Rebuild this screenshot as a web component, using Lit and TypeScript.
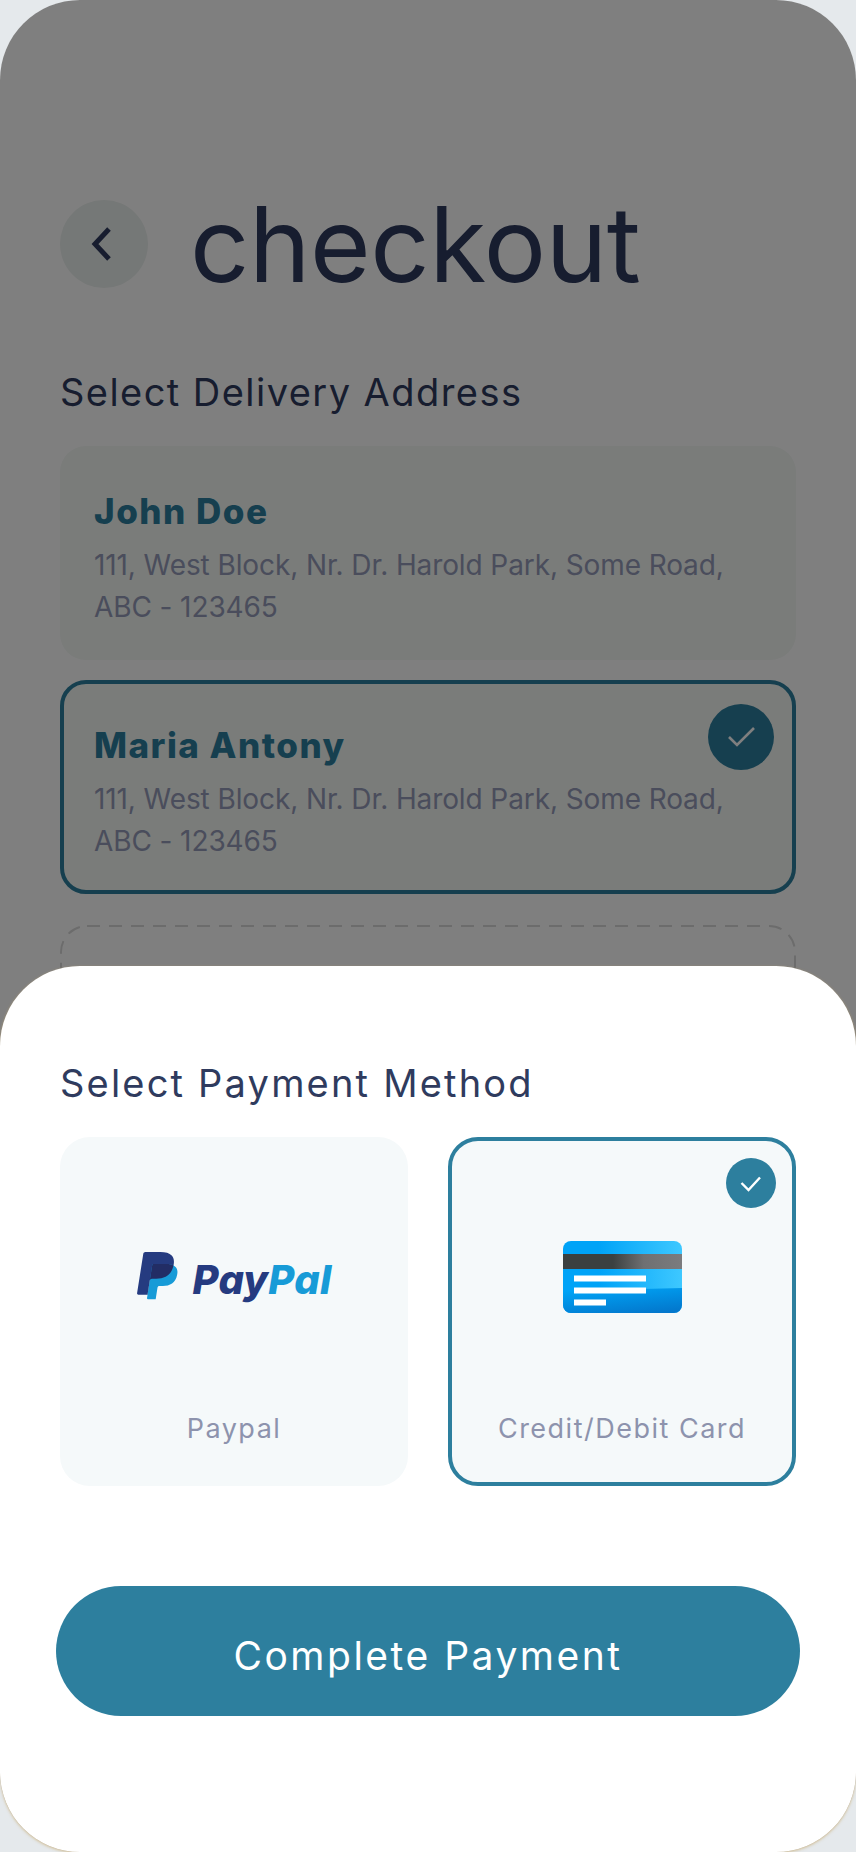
import { LitElement, html, css, svg } from "lit";
import { customElement } from "lit/decorators.js";

const ppPath = "M7.076 21.337H2.47a.641.641 0 0 1-.633-.74L4.944.901C5.026.382 5.474 0 5.998 0h7.46c2.57 0 4.578.543 5.69 1.81 1.01 1.15 1.304 2.42 1.012 4.287-.023.143-.047.288-.077.437-.983 5.05-4.349 6.797-8.647 6.797h-2.19c-.524 0-.968.382-1.05.9l-1.12 7.106z";

const paypalMark = svg`
  <defs>
    <clipPath id="ppclip"><path transform="translate(-3.6 0) scale(2)" d="${ppPath}"/></clipPath>
  </defs>
  <path transform="translate(-3.6 0) scale(2)" fill="#253b80" d="${ppPath}"/>
  <path transform="translate(7 12) scale(1.65)" fill="#179bd7" d="${ppPath}"/>
  <g clip-path="url(#ppclip)"><path transform="translate(7 12) scale(1.65)" fill="#222d65" d="${ppPath}"/></g>`;

@customElement("app-root")
export class AppRoot extends LitElement {
  static styles = css`
    :host {
      display: block;
      width: 856px;
      height: 1852px;
      background: #e5e9ec;
      font-family: Inter, "Noto Sans", sans-serif;
    }
    .phone {
      position: relative;
      width: 856px;
      height: 1852px;
    }
    .screen {
      box-sizing: border-box;
      height: 1852px;
      padding: 200px 60px 0;
      background: #fff;
      border-radius: 80px;
      overflow: hidden;
    }
    .overlay {
      position: absolute;
      inset: 0;
      background: rgba(0, 0, 0, 0.5);
      border-radius: 80px;
    }
    .header {
      display: flex;
      align-items: center;
      gap: 42px;
      height: 88px;
    }
    .back {
      width: 88px;
      height: 88px;
      border-radius: 50%;
      background: #ebf0ee;
      display: flex;
      align-items: center;
      justify-content: center;
      flex: none;
    }
    .back svg {
      margin-left: -6px;
    }
    .title {
      margin: 0;
      font-size: 104px;
      font-weight: 400;
      line-height: 88px;
      letter-spacing: -0.4px;
      color: #2f3b5e;
    }
    .section {
      margin: 0;
      font-weight: 400;
      font-size: 38px;
      line-height: 50px;
      letter-spacing: 1.45px;
      color: #2f3b5e;
    }
    .delivery {
      margin-top: 79px;
    }
    .addresses {
      display: flex;
      flex-direction: column;
      gap: 20px;
      margin-top: 29px;
    }
    .addr {
      position: relative;
      box-sizing: border-box;
      height: 214px;
      padding: 41px 32px 0;
      border-radius: 26px;
      background: #f4f8f5;
      border: 2px solid transparent;
    }
    .addr.selected {
      border: 4px solid #2d7f9e;
      padding: 39px 30px 0;
    }
    .name {
      margin: 0;
      font-size: 35px;
      font-weight: 800;
      line-height: 44px;
      letter-spacing: 1.5px;
      color: #2d7f9e;
    }
    .line {
      margin: 11px 0 0;
      font-size: 28px;
      line-height: 42px;
      letter-spacing: -0.1px;
      color: #949bb8;
    }
    .addr .tick {
      position: absolute;
      top: 20px;
      right: 18px;
      width: 66px;
      height: 66px;
    }
    .tick {
      border-radius: 50%;
      background: #2d7f9e;
      display: flex;
      align-items: center;
      justify-content: center;
    }
    .dashed {
      height: 214px;
      margin-top: 11px;
    }
    .dashed rect {
      fill: none;
      stroke: #d8d8d8;
      stroke-width: 2;
      stroke-dasharray: 13 9;
    }
    .sheet {
      position: absolute;
      left: 0;
      right: 0;
      bottom: 0;
      box-sizing: border-box;
      height: 886px;
      padding: 92px 60px 0;
      background: #fff;
      border-radius: 80px;
      box-shadow: 0 1px 3px rgba(200, 170, 110, 0.7);
    }
    .pay-title {
      color: #2f3b5e;
      letter-spacing: 2.2px;
    }
    .methods {
      display: grid;
      grid-template-columns: 348px 348px;
      gap: 40px;
      margin-top: 29px;
    }
    .method {
      position: relative;
      box-sizing: border-box;
      height: 349px;
      padding-bottom: 39px;
      border-radius: 30px;
      background: #f5f9fa;
      display: flex;
      flex-direction: column;
      align-items: center;
    }
    .method.selected {
      border: 4px solid #2d7f9e;
      padding-bottom: 35px;
    }
    .method .tick {
      position: absolute;
      top: 17px;
      right: 16px;
      width: 50px;
      height: 50px;
    }
    .logo {
      height: 72px;
      margin-top: 103px;
      flex: none;
      display: flex;
      align-items: center;
      justify-content: center;
    }
    .method.selected .logo {
      margin-top: 100px;
    }
    .paypal {
      gap: 14px;
    }
    .word {
      margin-top: 8px;
      font-size: 40px;
      font-weight: 800;
      font-style: italic;
      letter-spacing: 0.2px;
      line-height: 48px;
      color: #253b80;
    }
    .word span {
      color: #179bd7;
    }
    .label {
      margin-top: auto;
      font-size: 27px;
      line-height: 36px;
      letter-spacing: 1.5px;
      color: #8d93ad;
    }
    .pay {
      display: block;
      box-sizing: border-box;
      width: 744px;
      height: 130px;
      margin: 100px 0 0 -4px;
      padding: 8px 0 0;
      border: 0;
      border-radius: 65px;
      background: #2d7f9e;
      color: #fff;
      font-family: inherit;
      font-size: 39px;
      font-weight: 400;
      letter-spacing: 2.5px;
    }
    svg {
      display: block;
    }
  `;

  private check(size: number, w: number) {
    const pts = size === 66 ? "21,33 29,41 46,24" : "15.5,25 22.5,32 34,19.5";
    return html`<div class="tick"><svg width="${size}" height="${size}" viewBox="0 0 ${size} ${size}"><polyline points="${pts}" fill="none" stroke="#fff" stroke-width="${w}"/></svg></div>`;
  }

  private address(name: string, selected: boolean) {
    return html`<div class="addr ${selected ? "selected" : ""}">
      <p class="name">${name}</p>
      <p class="line">111, West Block, Nr. Dr. Harold Park, Some Road,<br />ABC - 123465</p>
      ${selected ? this.check(66, 2.6) : ""}
    </div>`;
  }

  render() {
    return html`<div class="phone">
      <div class="screen">
        <div class="header">
          <div class="back">
            <svg width="24" height="36" viewBox="0 0 24 36"><polyline points="20,3 6,18 20,33" fill="none" stroke="#2f3b5e" stroke-width="5"/></svg>
          </div>
          <h1 class="title">checkout</h1>
        </div>
        <h2 class="section delivery">Select Delivery Address</h2>
        <div class="addresses">
          ${this.address("John Doe", false)}
          ${this.address("Maria Antony", true)}
          <div class="dashed">
            <svg width="736" height="214" viewBox="0 0 736 214"><rect x="1" y="1" width="734" height="212" rx="26"/></svg>
          </div>
        </div>
      </div>
      <div class="overlay"></div>
      <div class="sheet">
        <h2 class="section pay-title">Select Payment Method</h2>
        <div class="methods">
          <div class="method">
            <div class="logo paypal">
              <svg width="42" height="48" viewBox="0 0 42 48">${paypalMark}</svg>
              <div class="word">Pay<span>Pal</span></div>
            </div>
            <div class="label">Paypal</div>
          </div>
          <div class="method selected">
            ${this.check(50, 2.4)}
            <div class="logo">
              <svg width="119" height="72" viewBox="0 0 119 72">
                <defs>
                  <linearGradient id="cb" x1="0" x2="1" y1="0" y2="0"><stop offset="0.3" stop-color="#00a3f7"/><stop offset="1" stop-color="#3ec8ff"/></linearGradient>
                  <linearGradient id="cl" x1="0.3" x2="0.8" y1="0" y2="1"><stop offset="0" stop-color="#00a3f5"/><stop offset="1" stop-color="#0377cc"/></linearGradient>
                  <linearGradient id="cs" x1="0" x2="1" y1="0" y2="0"><stop offset="0.42" stop-color="#3b4040"/><stop offset="0.68" stop-color="#6f7072"/><stop offset="1" stop-color="#7b7c7e"/></linearGradient>
                  <clipPath id="cc"><rect width="119" height="72" rx="8"/></clipPath>
                </defs>
                <g clip-path="url(#cc)">
                  <rect width="119" height="72" fill="url(#cb)"/>
                  <polygon points="0,72 0,50 119,47 119,72" fill="url(#cl)"/>
                  <rect y="13" width="119" height="15" fill="url(#cs)"/>
                  <rect x="11" y="34.5" width="72" height="6" fill="#fff"/>
                  <rect x="11" y="46.5" width="72" height="6" fill="#fff"/>
                  <rect x="11" y="58.5" width="32" height="6" fill="#fff"/>
                </g>
              </svg>
            </div>
            <div class="label">Credit/Debit Card</div>
          </div>
        </div>
        <button class="pay">Complete Payment</button>
      </div>
    </div>`;
  }
}
